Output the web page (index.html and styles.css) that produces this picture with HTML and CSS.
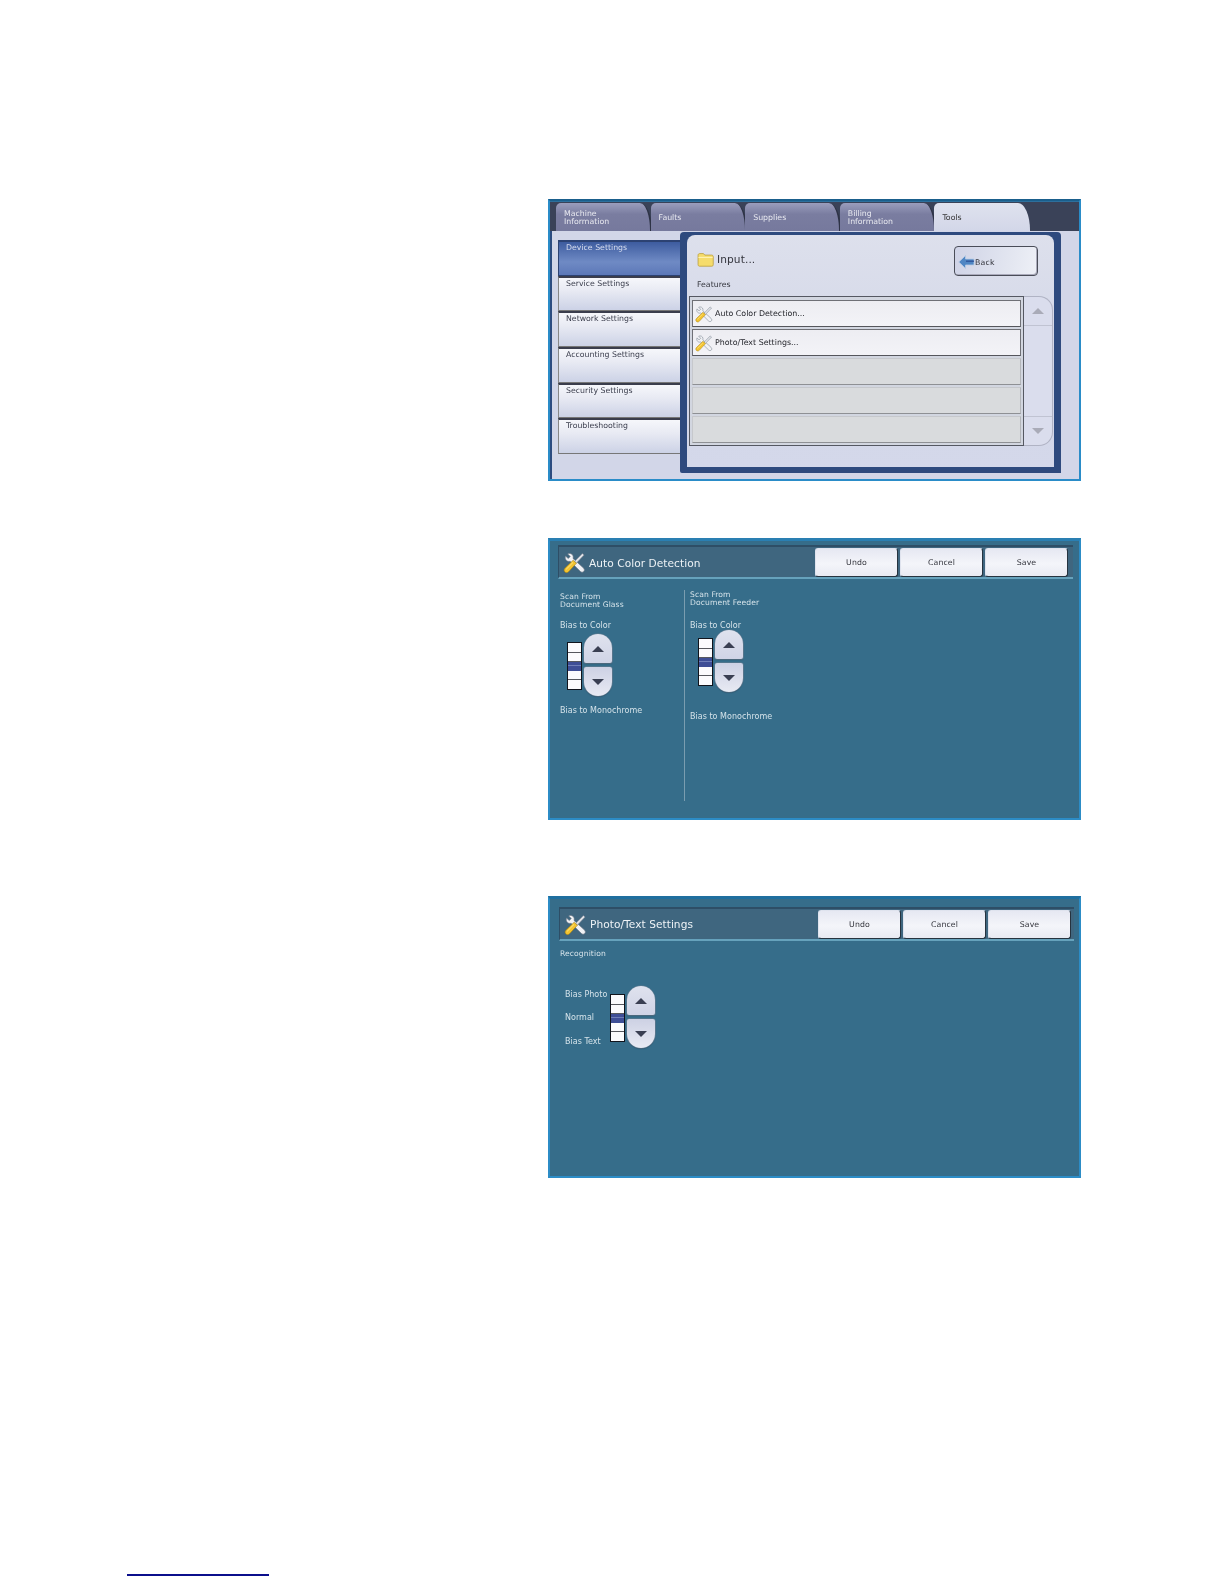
FILE: index.html
```html
<!DOCTYPE html>
<html lang="en">
<head>
<meta charset="utf-8">
<title>Device settings</title>
<link rel="stylesheet" href="styles.css">
</head>
<body>
<svg class="defs" width="0" height="0" aria-hidden="true">
  <defs>
    <symbol id="tools" viewBox="0 0 24 22">
      <path d="M2.6 4.2 5.4 6.8 7.6 4.8 4.9 2C7.2.8 10.2 2 10.6 4.8c.1.7 0 1.3-.2 1.9L21.4 16.8c1.2 1.2 1.2 2.8.2 3.7s-2.5.9-3.6-.3L7.4 9.7C4.4 10.6 1.4 7.9 2.6 4.2Z" fill="#f1f2f5" stroke="#6f7a88" stroke-width=".7"/>
      <path d="M12.2 9.8 20.2 1.6l1.9 1.5-8 8.4Z" fill="#dfe2e7" stroke="#6f7a88" stroke-width=".6"/>
      <path d="M1.9 20.9c-1.1-1.1-1.1-2.6 0-3.8L10.6 8.6l3.4 3.2-8.2 8.9c-1.2 1.2-2.8 1.3-3.9.2Z" fill="#f4c430" stroke="#9c7a14" stroke-width=".6"/>
      <path d="M3.2 18.2 10.4 11" stroke="#fbe68a" stroke-width="1"/>
    </symbol>
    <symbol id="folder" viewBox="0 0 16 15">
      <path d="M1 4c0-1 .6-1.6 1.5-1.6h3.6l1.2 1.4h6.4c1 0 1.6.6 1.6 1.5v7.5c0 .9-.6 1.5-1.5 1.5H2.5C1.6 14.3 1 13.7 1 12.8Z" fill="#f5dc6c" stroke="#b69a38" stroke-width=".7"/>
      <path d="M1.3 6h13.4" stroke="#fff3b4" stroke-width="1"/>
    </symbol>
    <symbol id="back" viewBox="0 0 17 14">
      <path d="M7.5 .6 .8 7l6.7 6.4V10H16V4H7.5Z" fill="#4f86c4" stroke="#b9cbe4" stroke-width=".8"/>
      <path d="M8 5.6h8v1.2H8Z" fill="#2c4f96"/>
    </symbol>
  </defs>
</svg>

<main class="page">
  <section class="screen device">
    <nav class="tabs">
      <div class="tab tab-two">Machine<br>Information</div>
      <div class="tab">Faults</div>
      <div class="tab">Supplies</div>
      <div class="tab tab-two">Billing<br>Information</div>
      <div class="tab tab-active">Tools</div>
    </nav>
    <div class="device-body">
      <ul class="side">
        <li class="side-item side-active">Device Settings</li>
        <li class="side-item">Service Settings</li>
        <li class="side-item">Network Settings</li>
        <li class="side-item">Accounting Settings</li>
        <li class="side-item">Security Settings</li>
        <li class="side-item">Troubleshooting</li>
      </ul>
      <div class="pane">
        <div class="pane-inner">
          <div class="pane-head">
            <div class="crumb">
              <svg class="folder"><use href="#folder"/></svg>
              <span>Input...</span>
            </div>
            <button class="back"><svg class="back-icon"><use href="#back"/></svg>Back</button>
          </div>
          <div class="features">Features</div>
          <div class="list-wrap">
            <div class="list">
              <div class="row row-on"><svg class="row-icon"><use href="#tools"/></svg>Auto Color Detection...</div>
              <div class="row row-on"><svg class="row-icon"><use href="#tools"/></svg>Photo/Text Settings...</div>
              <div class="row"></div>
              <div class="row"></div>
              <div class="row"></div>
            </div>
            <div class="scroll">
              <div class="scroll-end"><span class="tri-up"></span></div>
              <div class="scroll-end"><span class="tri-down"></span></div>
            </div>
          </div>
        </div>
      </div>
    </div>
  </section>

  <section class="screen blue">
    <header class="bar">
      <svg class="bar-icon"><use href="#tools"/></svg>
      <h2 class="bar-title">Auto Color Detection</h2>
      <div class="bar-btns">
        <button class="btn">Undo</button>
        <button class="btn">Cancel</button>
        <button class="btn">Save</button>
      </div>
    </header>
    <div class="cols">
      <div class="col col-a">
        <p class="cap">Scan From<br>Document Glass</p>
        <p class="lbl lbl-color">Bias to Color</p>
        <div class="stepper st-a">
          <div class="scale"><i></i><i></i><i class="on"></i><i></i><i></i></div>
          <div class="arrows">
            <div class="arrow arrow-up"><span class="tri-dark-up"></span></div>
            <div class="arrow arrow-down"><span class="tri-dark-down"></span></div>
          </div>
        </div>
        <p class="lbl lbl-mono-a">Bias to Monochrome</p>
      </div>
      <div class="col col-b">
        <p class="cap">Scan From<br>Document Feeder</p>
        <p class="lbl lbl-color">Bias to Color</p>
        <div class="stepper st-b">
          <div class="scale"><i></i><i></i><i class="on"></i><i></i><i></i></div>
          <div class="arrows">
            <div class="arrow arrow-up"><span class="tri-dark-up"></span></div>
            <div class="arrow arrow-down"><span class="tri-dark-down"></span></div>
          </div>
        </div>
        <p class="lbl lbl-mono-b">Bias to Monochrome</p>
      </div>
    </div>
  </section>

  <section class="screen blue third">
    <header class="bar bar-3">
      <svg class="bar-icon"><use href="#tools"/></svg>
      <h2 class="bar-title">Photo/Text Settings</h2>
      <div class="bar-btns">
        <button class="btn">Undo</button>
        <button class="btn">Cancel</button>
        <button class="btn">Save</button>
      </div>
    </header>
    <p class="cap recog">Recognition</p>
    <div class="photo">
      <div class="photo-labels">
        <span class="lbl">Bias Photo</span>
        <span class="lbl">Normal</span>
        <span class="lbl">Bias Text</span>
      </div>
      <div class="stepper">
        <div class="scale"><i></i><i></i><i class="on"></i><i></i><i></i></div>
        <div class="arrows">
          <div class="arrow arrow-up"><span class="tri-dark-up"></span></div>
          <div class="arrow arrow-down"><span class="tri-dark-down"></span></div>
        </div>
      </div>
    </div>
  </section>
</main>
<footer class="foot"><div class="rule"></div></footer>
</body>
</html>
```
FILE: styles.css
```css
* { box-sizing: border-box; }
html, body { margin: 0; padding: 0; }
body { width: 1224px; height: 1584px; background: #fff; font-family: "DejaVu Sans", sans-serif; overflow: hidden; }
.defs { position: absolute; }
p, ul, h2 { margin: 0; padding: 0; }
ul { list-style: none; }

.page { padding: 199px 0 0 548px; }
.screen { width: 533px; height: 282px; filter: blur(.3px); }

/* first screen */
.device { background: #d2d6e8; border: 2px solid #2a8cc8; border-top-color: #1a5f8c; display: flex; flex-direction: column; }
.tabs { height: 30px; flex: none; background: linear-gradient(#2d6f9c 0 1px, #3a4258 1px); display: flex; padding: 2px 0 0 6px; }
.tab { width: 96px; margin-right: -1.4px; height: 28px; background: linear-gradient(#9a9dbc, #7a7da0 40%, #76799d); border-radius: 5px 12px 0 0 / 5px 27px 0 0; border-right: 2px solid #2e3346; color: #e8e9f0; font-size: 7.8px; letter-spacing: 0; line-height: 8px; padding: 11px 0 0 8px; }
.tab-two { padding-top: 7px; }
.tab-active { background: linear-gradient(#dfe2ee, #d2d6e8); color: #333; border-right: 0; height: 29px; }
.device-body { flex: 1; display: flex; padding: 0 0 0 2px; background: #d2d6e8; border-left: 2px solid #2c4c80; position: relative; }
.side { width: 122px; margin: 9px 0 0 4px; }
.side-item { height: 35.7px; padding: 1px 0 0 7px; font-size: 7.8px; letter-spacing: 0; color: #3a3d4c; background: linear-gradient(#f6f7fb, #e8eaf3 40%, #ccd2e6); border-top: 2px solid #3a3d4c; border-left: 1px solid #888; border-bottom: 1px solid #777; }
.side-active { background: linear-gradient(#3d5c9f, #6f8ac4 60%, #5c78b8); color: #d8def0; border-color: #2c4272; }
.pane { width: 381px; height: 241px; margin-top: 1px; background: #2e4a7e; padding: 3px 7px 6px 7px; border-radius: 4px 4px 0 2px; }
.pane-inner { height: 100%; background: linear-gradient(#dde0ec, #d2d6e8 60%, #d4d8ea); border-radius: 8px 8px 0 0; padding: 11px 0 0 2px; }
.pane-head { display: flex; justify-content: space-between; align-items: flex-start; }
.crumb { display: flex; align-items: center; gap: 3px; margin: 5px 0 0 8px; font-size: 10.6px; letter-spacing: .1px; color: #33343c; }
.folder { width: 17px; height: 16px; }
.back { width: 84px; height: 30px; margin-right: 16px; border: 1px solid #4a4d58; border-radius: 4px; background: linear-gradient(100deg, #cfd3e6, #e4e7f1 70%, #eef0f7); display: flex; align-items: center; gap: 0; padding: 2px 0 0 3px; font: 7.8px "DejaVu Sans", sans-serif; letter-spacing: .2px; color: #33343c; box-shadow: inset -1px -1px 0 #aab; }
.back-icon { width: 17px; height: 14px; }
.features { font-size: 7.8px; letter-spacing: 0; color: #33343c; margin: 4px 0 0 8px; line-height: 10px; }
.list-wrap { display: flex; margin: 6px 0 0 0; }
.list { width: 335px; height: 150px; border: 1px solid #555862; padding: 3px 2px 0 2px; display: flex; flex-direction: column; gap: 2px; background: #d2d6e0; }
.row { height: 27px; background: #d9dbdd; border-bottom: 1px solid #8e9094; border-top: 1px solid #c6c8cc; border-left: 1px solid #c6c8cc; border-right: 1px solid #b4b6ba; }
.row-on { background: linear-gradient(#ededf2, #f3f3f7); border: 1px solid #6f7076; border-bottom-color: #55565c; display: flex; align-items: center; gap: 2px; padding: 0 0 0 2px; font-size: 7.9px; letter-spacing: 0; color: #24252b; }
.row-icon { width: 18px; height: 18px; }
.scroll { width: 29px; height: 150px; border: 1px solid #b0b3c4; border-left: 0; border-radius: 0 14px 14px 0; background: #dadded; display: flex; flex-direction: column; justify-content: space-between; }
.scroll-end { height: 29px; display: flex; align-items: center; justify-content: center; }
.scroll-end:first-child { border-bottom: 1px solid #c0c3d2; }
.scroll-end:last-child { border-top: 1px solid #c0c3d2; }
.tri-up, .tri-down { width: 0; height: 0; border-left: 6px solid transparent; border-right: 6px solid transparent; }
.tri-up { border-bottom: 6px solid #a9abb8; }
.tri-down { border-top: 6px solid #a9abb8; }

/* teal screens */
.blue { background: #366d8a; border: 2px solid #2c8cc6; border-top: 3px solid #2a7fb2; margin-top: 57px; padding: 4px 0 0 8px; color: #d5e3ea; }
.third { margin-top: 76px; border-top-color: #1f6f9f; padding-top: 8px; }
.bar { width: 515px; height: 34px; background: #3f667f; border-top: 2px solid #2e4e66; border-left: 1px solid #2e4e66; border-bottom: 2px solid #66a2bc; display: flex; align-items: center; padding: 0 5px 0 4px; }
.bar-3 { margin-left: 1px; padding-right: 3px; }
.bar-icon { width: 23px; height: 21px; flex: none; }
.bar-title { font-size: 10.6px; font-weight: normal; color: #eef3f6; margin-left: 3px; flex: 1; letter-spacing: .05px; padding-top: 2px; }
.bar-3 .bar-title { padding: 0 0 1px; }
.bar-btns { display: flex; gap: 2px; }
.btn { width: 83px; height: 29px; border: 1px solid #dfe3ee; border-right: 1.5px solid #26333f; border-bottom: 1.5px solid #26333f; border-radius: 3px; background: linear-gradient(#e6e8f2, #f4f5fa 55%, #e8eaf2); font: 7.8px "DejaVu Sans", sans-serif; letter-spacing: .1px; color: #33343c; padding: 0; }
.cols { display: flex; }
.col-a { width: 127px; height: 211px; margin-top: 11px; padding: 3px 0 0 2px; border-right: 1px solid #7a9db0; }
.col-b { margin-top: 11px; padding: 1px 0 0 5px; }
.cap { font-size: 7.6px; line-height: 8px; letter-spacing: .1px; color: #d5e3ea; }
.lbl { font-size: 8px; letter-spacing: .02px; line-height: 10px; color: #d5e3ea; display: block; white-space: nowrap; }
.lbl-color { margin-top: 12px; }
.col-b .lbl-color { margin-top: 14px; }
.stepper { display: flex; gap: 2px; align-items: center; }
.st-a { margin: 3px 0 0 7px; }
.st-b { margin: -1px 0 0 8px; }
.lbl-mono-a { margin-top: 10px; }
.lbl-mono-b { margin-top: 20px; }
.scale { width: 15px; height: 48px; margin-top: 2px; border: 1px solid #10141c; display: flex; flex-direction: column; background: #fff; }
.scale i { flex: 1; border-bottom: 1px solid #56585e; background: #fbfbfd; }
.scale i:last-child { border-bottom: 0; }
.scale .on { background: linear-gradient(#3e4e96 0 3px, #6f7eb8 3px 4px, #3e4e96 4px); border-bottom: 0; }
.arrows { display: flex; flex-direction: column; gap: 4px; }
.arrow { width: 28px; height: 29px; display: flex; align-items: center; justify-content: center; box-shadow: 0 0 0 .6px #6c7e90, 0 1px 1px rgba(30, 50, 70, .5); }
.arrow-up { border-radius: 14px 14px 2px 2px; background: linear-gradient(#dfe2ee, #d0d4e6); }
.arrow-down { border-radius: 2px 2px 14px 14px; background: linear-gradient(#cdd1e4, #e8eaf3); }
.tri-dark-up, .tri-dark-down { width: 0; height: 0; border-left: 6px solid transparent; border-right: 6px solid transparent; }
.tri-dark-up { border-bottom: 6px solid #3a3f52; }
.tri-dark-down { border-top: 6px solid #3a3f52; }

.recog { margin: 8px 0 0 2px; line-height: 10px; }
.photo { display: flex; margin: 27px 0 0 7px; align-items: center; }
.photo-labels { width: 45px; height: 59px; padding-top: 2px; display: flex; flex-direction: column; justify-content: space-between; }

.foot { padding: 0 0 0 127px; margin-top: 396px; }
.rule { width: 142px; height: 2px; background: #0b0f8c; }
```
